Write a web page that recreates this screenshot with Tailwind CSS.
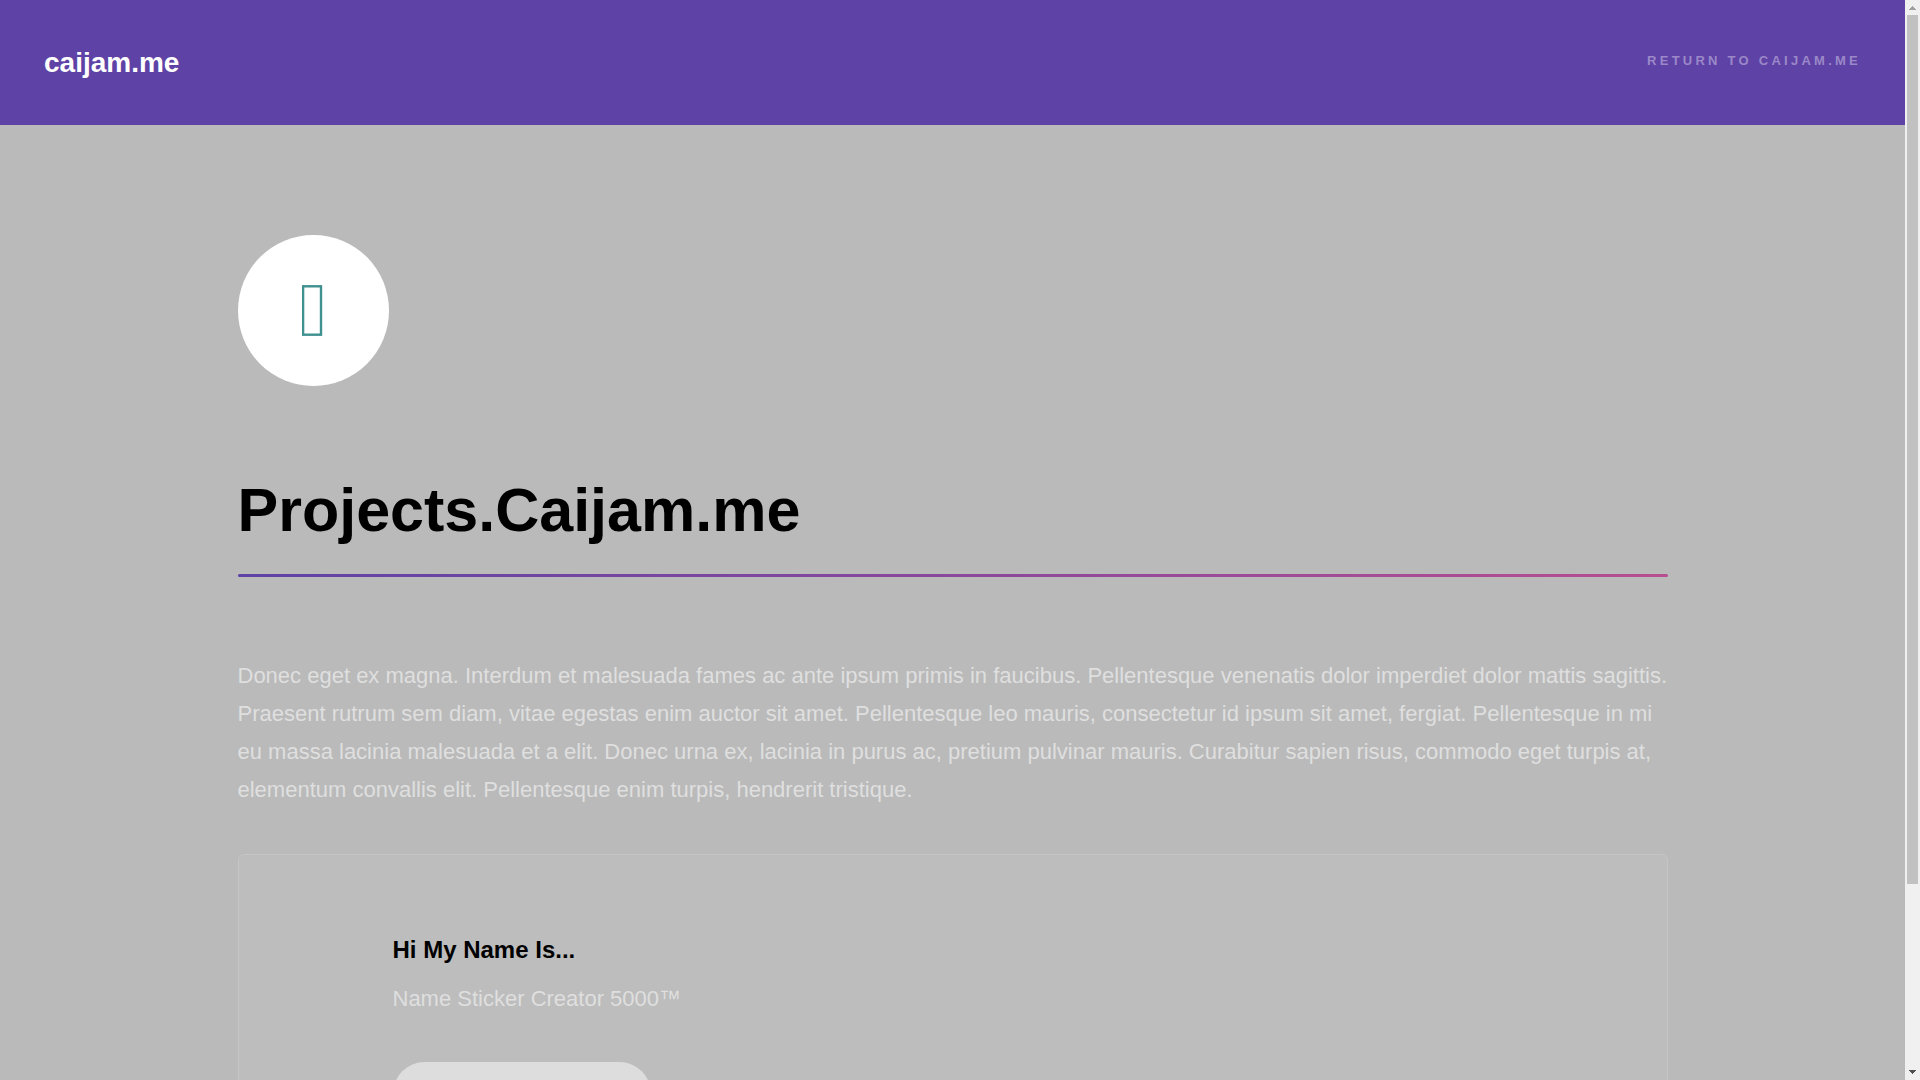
<!DOCTYPE html>
<html lang="en">
<head>
    <meta charset="UTF-8">
    <meta name="viewport" content="width=device-width, initial-scale=1.0">
    <title>Projects.Caijam.me</title>
    <script src="https://cdn.jsdelivr.net/npm/@tailwindcss/browser@4"></script>
</head>
<body class="flex h-screen overflow-hidden bg-[#bababa] font-['Liberation_Sans',Arial,sans-serif] text-[22px] leading-[38px] text-[#dfdfdf]">

    <div class="flex-1 min-w-0 overflow-hidden">
        <!-- Header -->
        <header class="flex items-center justify-between h-[125px] px-11 bg-[#5e42a6]">
            <a href="/" class="text-[28px] font-bold text-white">caijam.me</a>
            <nav class="pb-1">
                <a href="https://caijam.me" class="block text-[13px] font-bold uppercase tracking-[0.25em] text-[#9b88c8]">Return to caijam.me</a>
            </nav>
        </header>

        <!-- Main -->
        <main class="w-full max-w-[1430px] mx-auto pt-[110px]">
            <span class="flex items-center justify-center size-[151px] rounded-full bg-white">
                <svg class="w-[22px] h-[51px]" viewBox="0 0 22 51" fill="none" aria-hidden="true">
                    <rect x="1.1" y="1.3" width="17.9" height="48.4" stroke="#3f908f" stroke-width="2.4"/>
                </svg>
            </span>

            <h1 class="mt-[79px] text-[61px] leading-[90px] font-bold text-black">Projects.Caijam.me</h1>
            <div class="mt-[19px] h-[3px] rounded-full bg-linear-to-r/srgb from-[#5e42a6] to-[#b74e91]"></div>

            <p class="mt-20">Donec eget ex magna. Interdum et malesuada fames ac ante ipsum primis in faucibus. Pellentesque venenatis dolor imperdiet dolor mattis sagittis. Praesent rutrum sem diam, vitae egestas enim auctor sit amet. Pellentesque leo mauris, consectetur id ipsum sit amet, fergiat. Pellentesque in mi eu massa lacinia malesuada et a elit. Donec urna ex, lacinia in purus ac, pretium pulvinar mauris. Curabitur sapien risus, commodo eget turpis at, elementum convallis elit. Pellentesque enim turpis, hendrerit tristique.</p>

            <section class="mt-[45px] pt-[77px] pb-20 pl-[154px] pr-20 min-h-96 rounded-md border border-[#c5c5c5] bg-[#bdbdbd]">
                <h3 class="text-2xl leading-9 font-bold text-black">Hi My Name Is...</h3>
                <p class="mt-3">Name Sticker Creator 5000™</p>
                <a href="#" aria-label="Hi My Name Is" class="block mt-11 w-[258px] h-[63px] rounded-full bg-[#dddddd]"></a>
            </section>
        </main>
    </div>

    <!-- Scrollbar -->
    <div class="flex flex-col items-center w-[15px] shrink-0 bg-[#f0f0f0]" aria-hidden="true">
        <svg class="size-[15px]" viewBox="0 0 15 15" fill="#a0a0a0" shape-rendering="crispEdges">
            <path d="M7 6h1v1h1v1h1v1h1v1H4V9h1V8h1V7h1z"/>
        </svg>
        <div class="flex-1 w-full px-0.5">
            <div class="h-[82.8%] w-[11px] bg-[#c1c1c1]"></div>
        </div>
        <svg class="size-[15px]" viewBox="0 0 15 15" fill="#505050" shape-rendering="crispEdges">
            <path d="M4 5h7v1h-1v1H9v1H8v1H7V8H6V7H5V6H4z"/>
        </svg>
    </div>

</body>
</html>
